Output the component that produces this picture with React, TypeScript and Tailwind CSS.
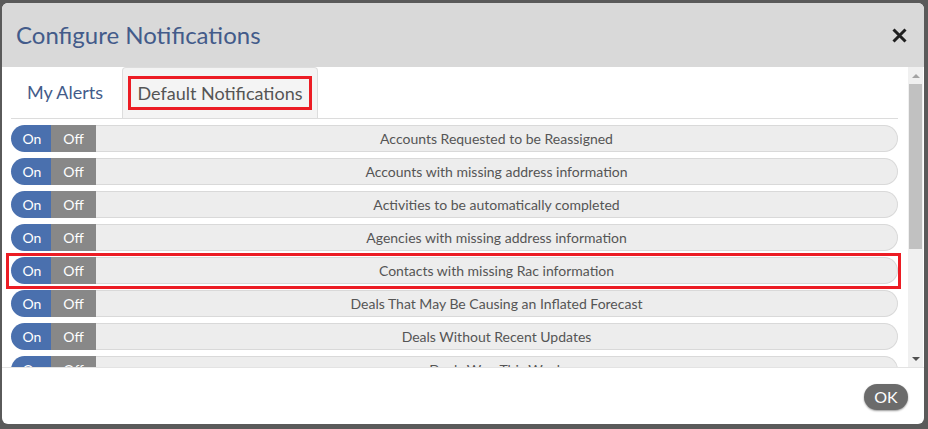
import React from 'react'

const rows = [
  'Accounts Requested to be Reassigned',
  'Accounts with missing address information',
  'Activities to be automatically completed',
  'Agencies with missing address information',
  'Contacts with missing Rac information',
  'Deals That May Be Causing an Inflated Forecast',
  'Deals Without Recent Updates',
  'Deals Won This Week',
  'Leads Pending Assignment',
  'Opportunities Past Close Date',
]

function Row({ label, marked }: { label: string; marked?: boolean }) {
  return (
    <div className="relative flex h-[27px] items-stretch">
      <div className="flex w-[40px] items-center justify-center rounded-l-full bg-[#4a70ae] pl-[2px] text-[14px] text-white">On</div>
      <div className="flex w-[45px] items-center justify-center bg-[#888888] text-[14px] text-white">Off</div>
      <div className="flex flex-1 items-center justify-center rounded-r-[14px] border border-l-0 border-[#d9d9d9] bg-[#ededed] text-[14px] text-[#555]">
        {label}
      </div>
      {marked && (
        <div className="pointer-events-none absolute -top-[4px] -bottom-[5px] -left-[5px] -right-[3px] border-[3px] border-[#ec1c24]" />
      )}
    </div>
  )
}

export default function App() {
  return (
    <div className="h-[429px] w-[928px] overflow-hidden bg-[#5a5a5a] pl-[2px] pt-[3px]" style={{ fontFamily: 'Lato, "Open Sans", sans-serif' }}>
      <div className="flex h-[421px] w-[922px] flex-col overflow-hidden rounded-[6px] bg-white">
        <div className="flex h-[64px] shrink-0 items-center justify-between bg-[#d9d9d9] pl-[14px] pr-[17px]">
          <h1 className="text-[24px] text-[#435b8a]">Configure Notifications</h1>
          <svg width="15" height="15" viewBox="0 0 15 15" className="mt-[1px]">
            <path d="M1.5 1.5 L13.5 13.5 M13.5 1.5 L1.5 13.5" stroke="#1f1f1f" strokeWidth="3" strokeLinecap="butt" />
          </svg>
        </div>

        <div className="flex h-[300px] shrink-0">
          <div className="flex-1 overflow-hidden pl-[9px] pr-[10px]">
            <div className="flex h-[52px] items-end border-b border-[#dcdcdc]">
              <div className="flex h-[51px] w-[111px] items-center justify-center pr-[3px] text-[18px] text-[#435b8a]">My Alerts</div>
              <div className="flex h-[51px] w-[196px] items-center justify-center rounded-t-[4px] border border-b-0 border-[#dddddd] bg-[#f4f4f4]">
                <span className="border-[3px] border-[#ec1c24] px-[7px] py-[3px] text-[18px] leading-[22px] text-[#555]">Default Notifications</span>
              </div>
            </div>
            <div className="mt-[6px] flex flex-col gap-[6px]">
              {rows.map((r, i) => (
                <Row key={r} label={r} marked={i === 4} />
              ))}
            </div>
          </div>
          <div className="mr-[1px] flex w-[15px] flex-col items-center bg-[#f0f0f0]">
            <div className="flex h-[17px] items-center justify-center">
              <div className="h-0 w-0 border-x-[4px] border-b-[4px] border-x-transparent border-b-[#a3a3a3]" />
            </div>
            <div className="h-[165px] w-[13px] bg-[#c1c1c1]" />
            <div className="flex-1" />
            <div className="flex h-[17px] items-center justify-center">
              <div className="h-0 w-0 border-x-[4px] border-t-[4px] border-x-transparent border-t-[#505050]" />
            </div>
          </div>
        </div>

        <div className="flex flex-1 items-start justify-end border-t border-[#e3e3e3] pr-[16px] pt-[16px]">
          <button className="flex h-[26px] w-[44px] items-center justify-center rounded-full bg-[#6b6b6b] text-[16px] text-white shadow-[0_1px_2px_rgba(0,0,0,0.4)]">OK</button>
        </div>
      </div>
    </div>
  )
}
